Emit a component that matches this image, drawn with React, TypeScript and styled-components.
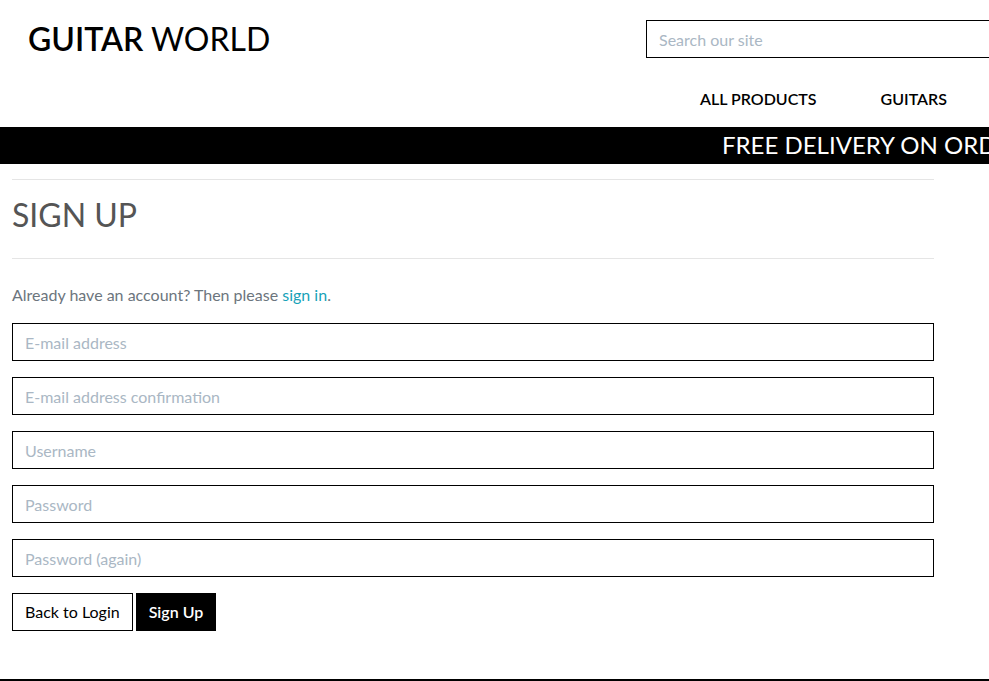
import React from "react";
import styled, { createGlobalStyle } from "styled-components";

const Global = createGlobalStyle`
  *, *::before, *::after { box-sizing: border-box; }
  html { overflow: hidden; }
  body {
    margin: 0;
    background: #fff;
    color: #555;
    font: 400 16px/24px Lato, sans-serif;
  }
`;

const Header = styled.header`
  display: flex;
  justify-content: space-between;
  height: 127px;
  padding: 20px 0 0 28px;
`;

const Logo = styled.a`
  color: #000;
  font-size: 32px;
  line-height: 38px;
  text-decoration: none;
  white-space: nowrap;
`;

const LogoStrong = styled.strong`
  font-weight: 600;
`;

const HeaderSide = styled.div`
  flex: none;
  width: 343px;
`;

const Field = styled.input`
  display: block;
  width: 100%;
  height: 38px;
  padding: 6px 12px;
  border: 1px solid #000;
  border-radius: 0;
  background: #fff;
  color: #000;
  font: inherit;
  &::placeholder { color: #aab7c4; opacity: 1; }
`;

const SearchField = styled(Field)`
  border-right: 0;
`;

const Nav = styled.nav`
  display: flex;
  gap: 64px;
  padding: 29px 0 0 54px;
`;

const NavLink = styled.a`
  color: #000;
  font-weight: 600;
  text-decoration: none;
  white-space: nowrap;
`;

const Banner = styled.div`
  height: 37px;
  padding-left: 722px;
  overflow: hidden;
  background: #000;
  color: #fff;
  font-size: 24px;
  line-height: 36px;
  white-space: nowrap;
`;

const Main = styled.main`
  margin: 15px 55px 0 12px;
`;

const Title = styled.h1`
  margin: 0 0 24px;
  padding: 16px 0 24px;
  border: solid #e5e5e5;
  border-width: 1px 0;
  font-size: 32px;
  line-height: 38px;
  font-weight: 400;
`;

const Intro = styled.p`
  margin: 0 0 16px;
  color: #6c757d;
`;

const TextLink = styled.a`
  color: #17a2b8;
  text-decoration: none;
`;

const Form = styled.form`
  display: grid;
  gap: 16px;
`;

const Actions = styled.div`
  display: flex;
  gap: 3px;
`;

const Button = styled.button<{ $solid?: boolean }>`
  height: 38px;
  padding: 6px 12px;
  border: 1px solid #000;
  background: ${(p) => (p.$solid ? "#000" : "#fff")};
  color: ${(p) => (p.$solid ? "#fff" : "#000")};
  font: inherit;
  font-weight: ${(p) => (p.$solid ? 600 : 400)};
  cursor: pointer;
`;

const Footer = styled.footer`
  height: 2px;
  margin-top: 48px;
  background: #000;
`;

const fields = [
  { label: "E-mail address", type: "email" },
  { label: "E-mail address confirmation", type: "email" },
  { label: "Username", type: "text" },
  { label: "Password", type: "password" },
  { label: "Password (again)", type: "password" },
];

export default function App() {
  return (
    <>
      <Global />
      <Header>
        <Logo href="#"><LogoStrong>GUITAR</LogoStrong> WORLD</Logo>
        <HeaderSide>
          <SearchField type="search" aria-label="Search our site" placeholder="Search our site" />
          <Nav>
            <NavLink href="#">ALL PRODUCTS</NavLink>
            <NavLink href="#">GUITARS</NavLink>
          </Nav>
        </HeaderSide>
      </Header>
      <Banner>FREE DELIVERY ON ORD</Banner>
      <Main>
        <Title>SIGN UP</Title>
        <Intro>Already have an account? Then please <TextLink href="#">sign in</TextLink>.</Intro>
        <Form onSubmit={(e) => e.preventDefault()}>
          {fields.map((f) => (
            <Field key={f.label} type={f.type} aria-label={f.label} placeholder={f.label} />
          ))}
          <Actions>
            <Button type="button">Back to Login</Button>
            <Button $solid type="submit">Sign Up</Button>
          </Actions>
        </Form>
      </Main>
      <Footer />
    </>
  );
}
